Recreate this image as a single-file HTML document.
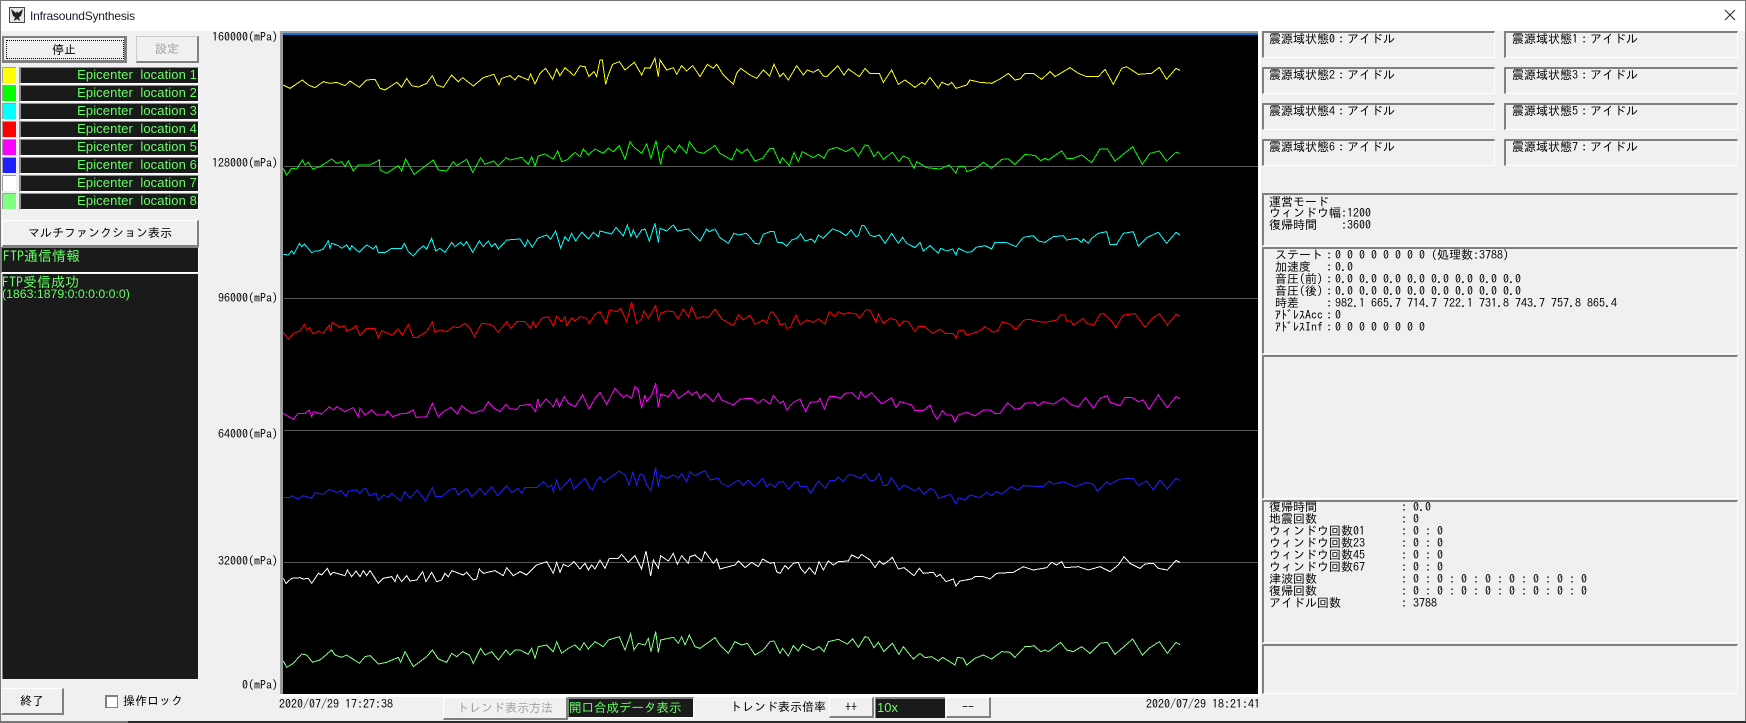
<!DOCTYPE html>
<html lang="ja">
<head>
<meta charset="utf-8">
<title>InfrasoundSynthesis</title>
<style>
html,body{margin:0;padding:0;width:1746px;height:723px;overflow:hidden;background:#f0f0f0}
body{position:relative;font:12px/12px "IPAGothic","Noto Sans CJK JP",monospace;color:#000}
div,span{position:absolute;box-sizing:border-box;white-space:pre}
.btn{background:#f0f0f0;border-top:1px solid #fff;border-left:1px solid #fff;border-right:2px solid #808080;border-bottom:2px solid #808080;text-align:center;display:flex;align-items:center;justify-content:center}
.dis{color:#a0a0a0}
.dark{background:#1a1a1a;color:#66ff66}
.sw{left:2px;width:14px;height:16px;border-top:1px solid #a0a0a0;border-left:1px solid #a0a0a0}
.ep{left:19px;width:180px;height:17px;background:#1a1a1a;border-top:1px solid #909090;border-left:2px solid #909090;border-bottom:1px solid #fff;border-right:1px solid #fff;color:#66ff66;font:13px/14px "Liberation Sans",sans-serif;text-align:right;letter-spacing:.1px;padding-right:1px}
.box{border-top:2px solid #808080;border-left:2px solid #808080;border-bottom:1px solid #fff;border-right:1px solid #fff;background:#f0f0f0}
.t{line-height:12px;height:12px}
.ax{right:1468px;line-height:12px;text-align:right}
svg{position:absolute;left:0;top:0}
polyline{fill:none;stroke-width:1;vector-effect:non-scaling-stroke;shape-rendering:crispEdges}
</style>
</head>
<body>
<!-- window frame -->
<div style="left:0;top:0;width:1746px;height:31px;background:#fff;border-top:1px solid #777"></div>
<div style="left:0;top:0;width:1px;height:723px;background:#777"></div>
<div style="left:1745px;top:0;width:1px;height:723px;background:#777"></div>
<div style="left:0;top:721px;width:1746px;height:2px;background:#2a2a2a"></div>
<div style="left:0;top:721px;width:128px;height:2px;background:#777"></div>

<svg width="1746" height="31" viewBox="0 0 1746 31">
<rect x="9.5" y="7.5" width="15" height="15" fill="#e6e6e6" stroke="#444"/>
<path d="M11 9l5 4 1-2 1 2 5-4-2 7-2 1 1 4-3-2-3 2 1-4-2-1z" fill="#222"/>
<path d="M1725 10l10 10M1735 10l-10 10" stroke="#222" stroke-width="1" fill="none"/>
</svg>
<div style="left:30px;top:9px;font:12px/14px 'Liberation Sans',sans-serif;letter-spacing:-.2px;color:#1a1a2a">InfrasoundSynthesis</div>

<!-- left controls -->
<div class="btn" style="left:2px;top:36px;width:125px;height:27px;border:2px solid #808080;border-right:3px solid #808080;border-bottom:3px solid #808080;padding-top:2px">停止</div>
<div style="left:6px;top:40px;width:118px;height:19px;border:1px dotted #000"></div>
<div class="btn dis" style="left:136px;top:36px;width:63px;height:27px;border-top:1px solid #ccc;border-left:1px solid #ccc">設定</div>

<div class="sw" style="top:67px;background:#ff0"></div>
<div class="sw" style="top:85px;background:#0f0"></div>
<div class="sw" style="top:103px;background:#0ff"></div>
<div class="sw" style="top:121px;background:#f00"></div>
<div class="sw" style="top:139px;background:#f0f"></div>
<div class="sw" style="top:157px;background:#1f1fff"></div>
<div class="sw" style="top:175px;background:#fff"></div>
<div class="sw" style="top:193px;background:#80ff80"></div>

<div class="ep" style="top:67px">Epicenter  location 1</div>
<div class="ep" style="top:85px">Epicenter  location 2</div>
<div class="ep" style="top:103px">Epicenter  location 3</div>
<div class="ep" style="top:121px">Epicenter  location 4</div>
<div class="ep" style="top:139px">Epicenter  location 5</div>
<div class="ep" style="top:157px">Epicenter  location 6</div>
<div class="ep" style="top:175px">Epicenter  location 7</div>
<div class="ep" style="top:193px">Epicenter  location 8</div>

<div class="btn" style="left:2px;top:220px;width:197px;height:27px">マルチファンクション表示</div>

<div class="dark" style="left:1px;top:247px;width:198px;height:26px;border:1px solid #808080;border-right:1px solid #fff;border-bottom:1px solid #fff;font-size:14px;line-height:16px;padding-left:1px">FTP通信情報</div>
<div class="dark" style="left:2px;top:274px;width:196px;height:405px;border-left:1px solid #808080"></div>
<div style="left:2px;top:274px;color:#66ff66;font-size:14px;line-height:16px">FTP受信成功</div>
<div style="left:2px;top:287px;color:#66ff66;font:12.3px/14px 'Liberation Sans',sans-serif">(1863:1879:0:0:0:0:0:0)</div>

<div class="btn" style="left:1px;top:688px;width:63px;height:27px">終了</div>
<div style="left:105px;top:695px;width:13px;height:13px;background:#fff;border:1px solid #808080;border-top:2px solid #808080;border-left:2px solid #808080"></div>
<div class="t" style="left:123px;top:695px">操作ロック</div>

<!-- axis labels -->
<div class="ax" style="top:31px">160000(mPa)</div>
<div class="ax" style="top:157px">128000(mPa)</div>
<div class="ax" style="top:292px">96000(mPa)</div>
<div class="ax" style="top:428px">64000(mPa)</div>
<div class="ax" style="top:555px">32000(mPa)</div>
<div class="ax" style="top:679px">0(mPa)</div>

<!-- chart -->
<div style="left:280px;top:31px;width:981px;height:666px;background:#fff"></div>
<div style="left:280px;top:31px;width:978px;height:663px;background:#000;border-left:3px solid #9a9a9a;border-top:2px solid #a0a0a0"></div>
<div style="left:283px;top:33px;width:975px;height:2px;background:#0078d7"></div>
<div style="left:284px;top:166px;width:974px;height:1px;background:#5a5a5a"></div>
<div style="left:284px;top:298px;width:974px;height:1px;background:#5a5a5a"></div>
<div style="left:284px;top:430px;width:974px;height:1px;background:#5a5a5a"></div>
<div style="left:284px;top:562px;width:974px;height:1px;background:#5a5a5a"></div>

<svg width="1746" height="723" viewBox="0 0 1746 723">
<g transform="translate(270 25) scale(.33333)">
<polyline stroke="#ff0" points="40,180 60,190 75,180 97,165 115,180 135,188 160,170 180,175 200,172 225,182 240,168 268,187 290,165 315,163 330,190 345,195 380,172 395,186 410,160 425,182 445,186 470,175 487,152 500,180 520,187 545,150 565,170 578,158 610,183 640,158 672,148 687,180 695,160 720,152 735,165 745,152 775,165 782,147 795,177 810,145 827,130 848,163 860,132 870,152 885,128 912,152 930,123 945,125 957,155 972,140 980,155 990,105 997,105 1007,178 1015,150 1028,118 1048,110 1065,135 1093,112 1115,150 1125,128 1140,130 1155,100 1165,155 1170,105 1190,135 1210,128 1220,148 1235,122 1250,138 1268,122 1290,155 1312,118 1330,130 1340,118 1360,150 1390,178 1400,145 1412,130 1440,150 1460,160 1480,135 1500,155"/>
<polyline stroke="#0f0" points="40,430 50,450 65,430 80,432 97,405 105,420 115,412 128,432 150,425 185,402 200,415 215,410 225,425 235,408 250,438 265,420 300,420 328,405 330,435 350,445 385,422 395,438 407,402 432,448 470,420 490,405 505,435 530,438 550,410 560,422 590,403 608,442 632,398 645,418 670,408 685,423 708,398 720,405 755,397 775,418 785,395 795,423 805,393 825,387 850,402 863,378 875,410 890,405 915,382 930,395 940,372 955,390 975,372 1000,385 1015,370 1030,380 1048,362 1065,403 1080,350 1090,365 1115,385 1130,357 1143,400 1158,347 1172,418 1180,380 1195,362 1215,382 1228,360 1250,385 1258,350 1280,380 1300,385 1335,362 1350,385 1385,405 1400,372 1415,385 1432,372 1455,408 1478,400 1500,370"/>
</g>
<g transform="translate(770 25) scale(.33333)">
<polyline stroke="#ff0" points="0,150 12,118 30,155 40,145 55,165 80,122 100,150 112,135 130,142 145,133 160,153 170,155 190,135 203,122 222,150 235,132 268,155 285,130 300,145 328,145 340,172 365,135 385,178 405,165 435,187 455,172 465,178 480,157 505,190 515,172 535,180 545,172 558,190 590,180 600,165 630,172 665,175 690,162 715,145 735,165 750,162 765,145 790,145 815,163 840,140 855,155 900,128 925,145 950,155 985,155 1005,133 1030,178 1055,130 1070,125 1105,148 1145,145 1168,127 1190,163 1218,130 1230,136"/>
<polyline stroke="#0f0" points="0,370 10,370 30,415 37,398 58,422 72,382 85,410 97,380 130,398 145,388 162,400 175,375 200,367 228,380 248,368 265,393 285,360 295,362 312,395 325,380 340,403 367,382 387,410 400,393 415,400 432,430 440,410 470,428 510,432 538,420 558,445 565,425 585,425 590,440 615,432 640,412 665,430 695,403 715,402 735,418 765,388 795,392 812,407 825,400 835,405 875,378 890,400 910,400 935,390 965,413 990,372 1012,372 1035,408 1088,365 1117,418 1140,385 1168,378 1190,408 1218,382 1230,385"/>
</g>
<g transform="translate(270 215) scale(.33333)">
<polyline stroke="#0ff" points="40,118 55,120 65,107 72,117 88,85 95,95 103,87 125,113 135,108 145,108 160,102 175,77 180,100 185,85 205,92 215,100 230,90 240,105 245,92 268,112 290,90 310,102 318,92 325,112 345,113 365,100 395,100 403,85 415,110 430,123 445,105 460,93 470,102 485,70 497,108 510,100 525,112 545,82 555,95 572,82 580,92 590,80 608,112 628,78 640,95 655,78 665,95 675,85 685,102 710,75 750,72 765,95 773,75 787,97 803,70 830,60 842,72 857,48 872,100 885,65 895,78 905,55 917,78 935,52 955,72 970,52 985,65 990,48 1025,57 1038,37 1060,63 1072,30 1083,65 1090,45 1100,68 1115,45 1125,42 1138,78 1155,25 1165,82 1170,40 1190,48 1210,30 1222,48 1255,42 1290,78 1310,42 1318,50 1335,42 1350,68 1375,85 1392,55 1405,60 1430,55 1455,85 1468,87 1480,58 1500,50"/>
<polyline stroke="#f00" points="40,352 55,373 70,355 90,348 103,328 110,345 118,338 130,357 145,348 160,355 178,330 182,348 187,322 210,337 225,332 230,348 245,342 258,332 270,362 290,340 315,340 325,368 335,347 365,360 385,342 397,360 415,328 430,368 440,368 470,350 487,320 495,352 510,345 530,350 550,335 565,338 585,325 600,340 613,365 635,325 660,328 672,335 685,352 710,320 722,340 740,320 765,320 782,340 790,320 797,337 815,310 835,305 850,333 860,303 875,320 885,305 890,332 905,308 915,318 930,305 950,310 958,325 975,298 990,290 1008,325 1018,285 1040,290 1052,280 1070,320 1085,262 1100,325 1115,312 1122,288 1135,310 1157,272 1165,315 1172,295 1190,288 1210,290 1225,312 1240,282 1255,305 1265,275 1280,310 1300,305 1315,308 1335,282 1355,312 1390,332 1405,300 1420,315 1440,300 1455,328 1480,315 1490,325 1500,295"/>
<polyline stroke="#f0f" points="40,595 70,613 85,595 105,595 118,585 125,605 130,590 155,597 178,575 190,585 200,575 225,590 250,578 265,605 270,580 285,600 305,585 320,600 345,600 352,587 368,605 395,595 410,595 430,585 438,607 470,605 487,565 505,605 520,590 543,577 562,597 575,572 590,585 608,595 640,585 655,560 670,578 690,590 708,568 720,582 740,583 750,572 780,568 797,590 803,552 810,575 828,552 850,575 860,553 868,575 883,545 895,565 915,575 938,540 957,582 975,550 990,532 1010,568 1035,520 1060,548 1070,540 1085,550 1095,515 1105,525 1115,580 1125,540 1130,560 1145,540 1157,505 1165,578 1172,537 1195,545 1210,525 1225,550 1240,540 1255,528 1265,540 1280,530 1290,550 1305,535 1330,560 1345,535 1355,555 1390,570 1410,552 1445,550 1465,565 1480,552 1500,568"/>
</g>
<g transform="translate(770 215) scale(.33333)">
<polyline stroke="#0ff" points="0,50 12,50 22,82 35,82 50,93 65,75 80,70 92,57 105,78 125,72 135,82 145,60 160,70 175,55 188,42 210,50 228,62 243,45 258,65 265,62 275,32 283,32 300,60 312,65 328,60 345,85 365,55 385,85 398,67 410,85 435,98 450,82 460,108 470,100 480,92 505,115 512,100 530,108 548,102 558,120 565,100 590,112 605,110 618,97 645,92 665,102 675,82 710,83 738,95 760,67 790,62 805,78 825,82 850,65 880,62 890,75 920,70 935,82 940,72 955,85 965,70 985,55 1010,50 1020,88 1040,88 1060,55 1090,50 1105,93 1130,68 1165,52 1190,85 1218,52 1230,60"/>
<polyline stroke="#f00" points="0,295 8,290 25,315 30,330 45,325 50,340 60,338 78,300 90,328 112,315 130,322 145,312 165,327 178,290 195,305 205,290 220,298 235,293 258,297 268,310 288,284 300,285 318,322 325,297 340,325 360,310 378,315 388,333 402,318 415,320 435,350 445,335 465,335 488,355 510,342 525,355 550,355 558,370 565,348 580,345 590,360 625,350 645,335 670,352 685,345 697,320 720,328 737,343 762,315 780,313 795,318 825,322 860,315 872,300 885,300 890,318 902,318 910,330 940,310 950,325 972,330 990,298 1000,295 1025,318 1037,338 1060,300 1095,296 1125,337 1145,312 1168,296 1192,330 1218,298 1230,304"/>
<polyline stroke="#f0f" points="0,568 10,542 30,565 40,558 50,585 70,562 90,552 107,590 120,562 145,560 150,550 163,582 178,545 195,545 210,550 225,535 245,533 265,552 272,530 285,548 305,533 335,567 365,548 378,578 390,560 425,570 435,587 460,587 480,570 490,595 502,613 517,587 530,600 545,600 555,620 565,600 590,592 615,603 640,585 660,585 675,595 690,595 713,563 735,583 750,580 765,565 795,563 805,572 820,560 850,568 880,548 905,570 925,575 947,548 970,580 990,550 1012,542 1020,562 1050,572 1065,547 1085,547 1105,560 1120,555 1137,583 1165,540 1192,578 1218,545 1230,551"/>
</g>
<g transform="translate(270 455) scale(.33333)">
<polyline stroke="#1f1fff" points="40,127 60,127 68,122 82,133 100,122 125,130 135,113 160,118 178,103 200,112 215,107 228,125 235,108 260,105 270,115 278,103 288,100 298,122 318,115 325,135 340,120 355,127 365,115 392,138 405,110 420,130 442,105 466,138 487,97 497,125 515,125 540,103 555,100 565,120 590,100 605,125 630,100 645,120 665,95 683,122 710,92 725,112 745,100 755,115 765,97 800,98 820,80 835,97 845,90 850,110 860,75 870,105 895,78 900,70 912,102 945,70 960,100 968,105 975,85 990,65 1000,82 1025,65 1048,48 1065,60 1077,90 1088,52 1100,90 1110,58 1120,60 1130,90 1143,107 1157,38 1165,95 1172,60 1190,70 1210,60 1225,70 1235,55 1250,80 1260,50 1275,62 1305,47 1320,75 1345,70 1355,85 1375,95 1405,75 1420,90 1435,75 1452,95 1478,70 1490,95 1500,85"/>
<polyline stroke="#fff" points="40,370 48,385 65,370 90,368 100,372 115,370 125,385 145,355 155,360 172,340 182,360 190,352 225,362 232,345 245,365 258,348 270,365 280,347 290,362 300,347 325,385 340,370 365,365 375,380 382,360 395,380 410,362 420,378 440,375 458,350 468,380 485,352 500,380 515,375 525,355 535,365 545,347 580,360 590,352 610,375 620,372 628,342 640,355 675,347 700,362 710,338 730,362 750,350 770,360 800,330 830,320 850,355 860,322 870,352 880,328 895,335 912,320 930,342 945,325 955,345 965,330 975,342 990,315 1005,340 1018,310 1045,310 1055,298 1075,322 1095,302 1115,342 1128,288 1142,363 1150,315 1165,340 1172,302 1195,318 1210,295 1222,328 1235,302 1255,325 1260,305 1275,300 1295,318 1305,290 1330,325 1340,312 1350,342 1395,330 1405,318 1425,338 1445,322 1465,335 1478,312 1500,325"/>
<polyline stroke="#80ff80" points="40,618 50,637 70,625 95,597 110,600 128,622 150,615 185,585 195,600 215,607 230,600 268,625 285,605 300,602 325,627 350,622 385,607 392,622 405,590 430,635 470,605 487,585 505,612 530,622 545,595 560,605 578,590 598,600 610,625 632,580 645,600 665,590 685,615 708,585 720,600 735,585 750,585 775,598 785,580 795,610 805,575 830,570 850,590 860,560 875,595 895,580 915,570 930,585 942,563 955,582 975,560 1000,575 1015,555 1048,545 1065,585 1082,537 1092,585 1105,565 1125,570 1135,550 1143,590 1157,530 1165,592 1172,555 1210,547 1225,565 1235,545 1245,570 1258,540 1275,575 1290,580 1335,548 1350,570 1375,595 1395,560 1415,570 1432,565 1455,600 1480,585 1500,560"/>
</g>
<g transform="translate(770 455) scale(.33333)">
<polyline stroke="#1f1fff" points="0,85 15,97 25,82 40,80 55,102 75,82 85,80 90,95 110,95 122,115 145,78 165,100 180,77 195,77 205,67 220,80 235,60 250,60 270,70 285,55 300,78 315,75 327,55 340,92 350,92 365,68 388,105 402,90 435,108 447,98 462,118 480,100 495,108 505,130 530,122 542,118 558,147 565,128 585,135 600,120 630,128 650,112 665,122 680,110 695,118 722,95 745,105 760,92 820,95 838,78 850,88 880,80 915,95 950,82 970,88 982,108 1010,80 1020,88 1050,72 1090,70 1105,92 1130,78 1150,105 1170,75 1192,102 1218,70 1230,76"/>
<polyline stroke="#fff" points="0,325 12,322 20,350 30,355 45,332 55,342 70,325 85,322 92,340 105,355 118,338 135,358 147,320 160,345 175,318 190,330 205,320 235,318 245,300 265,310 275,298 300,315 315,338 328,318 340,328 350,322 367,307 385,342 402,338 432,362 448,340 460,355 490,352 500,365 510,358 528,380 550,372 558,393 570,378 605,372 615,365 640,365 660,372 680,355 730,352 760,335 790,345 830,338 845,322 860,330 875,320 885,338 925,335 955,345 990,335 1020,350 1045,330 1062,305 1080,325 1110,340 1125,327 1150,325 1165,340 1192,345 1218,316 1230,322"/>
<polyline stroke="#80ff80" points="0,560 12,558 30,595 38,580 55,603 70,572 85,588 97,568 130,585 147,575 162,590 175,560 205,553 232,567 248,552 265,577 285,545 295,548 312,578 325,562 342,590 367,565 387,598 400,575 430,612 450,595 465,608 485,605 505,618 518,607 555,630 562,607 580,610 590,630 615,610 640,600 665,612 695,590 720,592 735,607 765,575 780,575 792,572 812,590 825,585 835,590 872,562 890,585 910,590 935,575 960,595 990,565 1012,562 1035,598 1088,552 1117,600 1140,578 1168,560 1192,595 1218,562 1230,569"/>
</g>
</svg>

<!-- bottom bar -->
<div class="t" style="left:279px;top:698px">2020/07/29 17:27:38</div>
<div class="t" style="left:1146px;top:698px">2020/07/29 18:21:41</div>
<div class="btn dis" style="left:443px;top:697px;width:125px;height:23px">トレンド表示方法</div>
<div class="dark" style="left:568px;top:697px;width:126px;height:21px;border-top:2px solid #808080;border-left:1px solid #808080;border-right:1px solid #fff;border-bottom:1px solid #fff;font-size:12.5px;line-height:17px;padding-left:0">開口合成データ表示</div>
<div class="t" style="left:730px;top:701px">トレンド表示倍率</div>
<div class="btn" style="left:829px;top:697px;width:45px;height:21px">++</div>
<div class="dark" style="left:875px;top:697px;width:70px;height:21px;border-top:2px solid #808080;border-left:1px solid #808080;font:13px/18px 'Liberation Sans',sans-serif;padding-left:1px">10x</div>
<div class="btn" style="left:946px;top:697px;width:45px;height:21px">--</div>

<!-- right panels -->
<div class="box" style="left:1262px;top:31px;width:233px;height:27px"></div>
<div class="box" style="left:1504px;top:31px;width:234px;height:27px"></div>
<div class="box" style="left:1262px;top:67px;width:233px;height:27px"></div>
<div class="box" style="left:1504px;top:67px;width:234px;height:27px"></div>
<div class="box" style="left:1262px;top:103px;width:233px;height:27px"></div>
<div class="box" style="left:1504px;top:103px;width:234px;height:27px"></div>
<div class="box" style="left:1262px;top:139px;width:233px;height:27px"></div>
<div class="box" style="left:1504px;top:139px;width:234px;height:27px"></div>
<div class="t" style="left:1269px;top:33px">震源域状態0&#xFF1A;アイドル</div>
<div class="t" style="left:1512px;top:33px">震源域状態1&#xFF1A;アイドル</div>
<div class="t" style="left:1269px;top:69px">震源域状態2&#xFF1A;アイドル</div>
<div class="t" style="left:1512px;top:69px">震源域状態3&#xFF1A;アイドル</div>
<div class="t" style="left:1269px;top:105px">震源域状態4&#xFF1A;アイドル</div>
<div class="t" style="left:1512px;top:105px">震源域状態5&#xFF1A;アイドル</div>
<div class="t" style="left:1269px;top:141px">震源域状態6&#xFF1A;アイドル</div>
<div class="t" style="left:1512px;top:141px">震源域状態7&#xFF1A;アイドル</div>

<div class="box" style="left:1262px;top:193px;width:476px;height:53px"></div>
<div class="t" style="left:1269px;top:196px">運営モード</div>
<div class="t" style="left:1269px;top:207px">ウィンドウ幅:1200</div>
<div class="t" style="left:1269px;top:219px">復帰時間    :3600</div>

<div class="box" style="left:1262px;top:247px;width:476px;height:107px"></div>
<div class="t" style="left:1275px;top:249px">ステート&#xFF1A;0 0 0 0 0 0 0 0 (処理数:3788)</div>
<div class="t" style="left:1275px;top:261px">加速度  &#xFF1A;0.0</div>
<div class="t" style="left:1275px;top:273px">音圧(前)&#xFF1A;0.0 0.0 0.0 0.0 0.0 0.0 0.0 0.0</div>
<div class="t" style="left:1275px;top:285px">音圧(後)&#xFF1A;0.0 0.0 0.0 0.0 0.0 0.0 0.0 0.0</div>
<div class="t" style="left:1275px;top:297px">時差    &#xFF1A;982.1 665.7 714.7 722.1 731.8 743.7 757.8 865.4</div>
<div class="t" style="left:1275px;top:309px">ｱﾄﾞﾚｽAcc&#xFF1A;0</div>
<div class="t" style="left:1275px;top:321px">ｱﾄﾞﾚｽInf&#xFF1A;0 0 0 0 0 0 0 0</div>

<div class="box" style="left:1262px;top:355px;width:476px;height:144px"></div>

<div class="box" style="left:1262px;top:500px;width:476px;height:143px"></div>
<div class="t" style="left:1269px;top:501px">復帰時間              : 0.0</div>
<div class="t" style="left:1269px;top:513px">地震回数              : 0</div>
<div class="t" style="left:1269px;top:525px">ウィンドウ回数01      : 0 : 0</div>
<div class="t" style="left:1269px;top:537px">ウィンドウ回数23      : 0 : 0</div>
<div class="t" style="left:1269px;top:549px">ウィンドウ回数45      : 0 : 0</div>
<div class="t" style="left:1269px;top:561px">ウィンドウ回数67      : 0 : 0</div>
<div class="t" style="left:1269px;top:573px">津波回数              : 0 : 0 : 0 : 0 : 0 : 0 : 0 : 0</div>
<div class="t" style="left:1269px;top:585px">復帰回数              : 0 : 0 : 0 : 0 : 0 : 0 : 0 : 0</div>
<div class="t" style="left:1269px;top:597px">アイドル回数          : 3788</div>

<div class="box" style="left:1262px;top:644px;width:476px;height:50px"></div>
</body>
</html>
